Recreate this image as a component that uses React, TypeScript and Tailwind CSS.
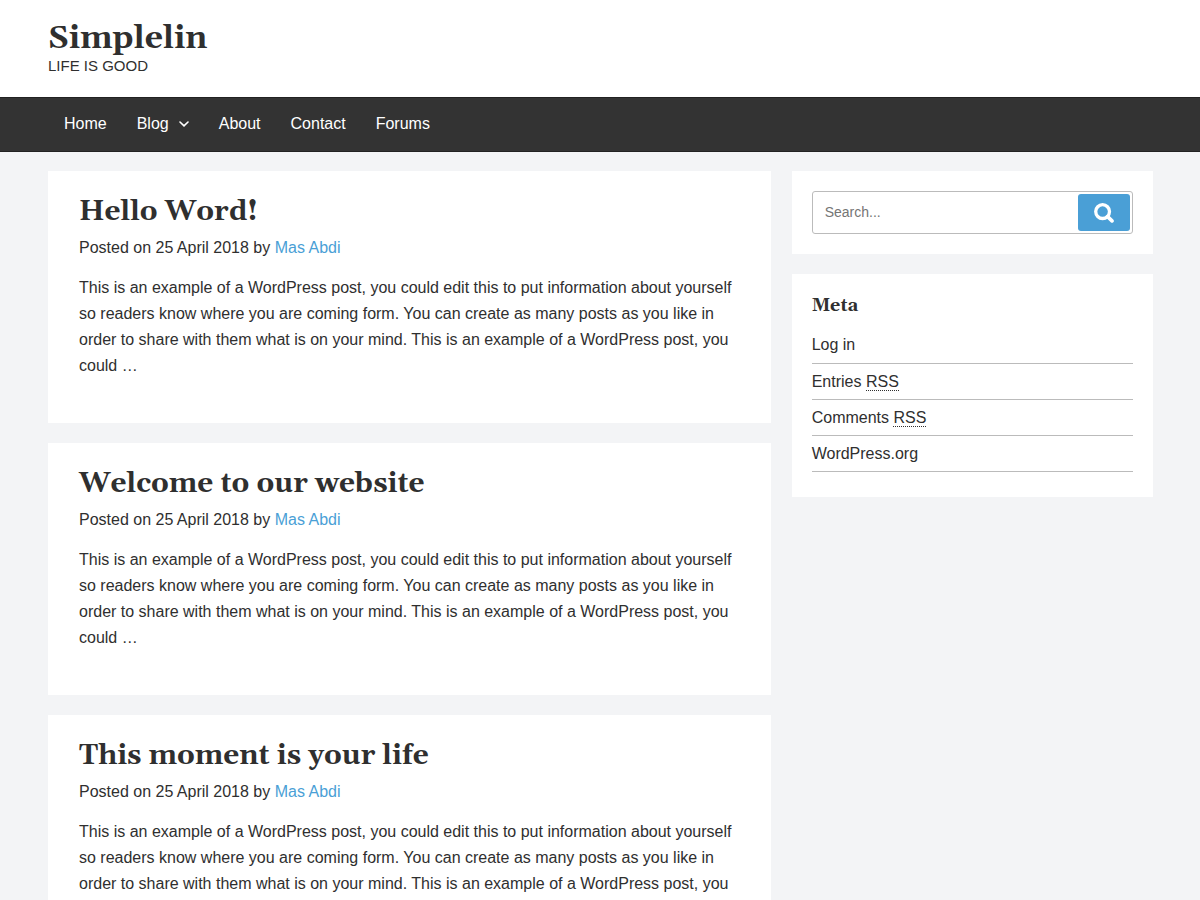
const serif = "font-[Georgia,Gelasio,'DejaVu_Serif',serif]";

const excerpt =
  "This is an example of a WordPress post, you could edit this to put information about yourself so readers know where you are coming form. You can create as many posts as you like in order to share with them what is on your mind. This is an example of a WordPress post, you could …";

const posts = ["Hello Word!", "Welcome to our website", "This moment is your life"];

const navItems = ["Home", "Blog", "About", "Contact", "Forums"];

function Post({ title }: { title: string }) {
  return (
    <article className="bg-white px-[31px] pt-[22px] pb-11">
      <h2 className={`${serif} text-[28px] leading-[38px] font-bold`}>
        <a href="#">{title}</a>
      </h2>
      <p className="mt-1 leading-[26px]">
        Posted on 25 April 2018 by{" "}
        <a href="#" className="text-[#4a9fd6]">
          Mas Abdi
        </a>
      </p>
      <p className="mt-3.5 leading-[26px]">{excerpt}</p>
    </article>
  );
}

function SearchIcon() {
  return (
    <svg viewBox="0 0 20 20" className="size-5" fill="none" stroke="currentColor" aria-hidden="true">
      <circle cx="8.6" cy="8.6" r="6.9" strokeWidth="3.3" />
      <path d="M13.6 13.6 L18 17.9" strokeWidth="3.6" strokeLinecap="round" />
    </svg>
  );
}

function ChevronIcon() {
  return (
    <svg viewBox="0 0 10 6" className="h-[6px] w-[10px]" fill="none" stroke="currentColor" aria-hidden="true">
      <path d="M1 1 L5 4.9 L9 1" strokeWidth="1.6" strokeLinecap="round" />
    </svg>
  );
}

export default function App() {
  return (
    <div className="min-h-screen bg-[#f3f4f6] pb-5 font-['Liberation_Sans',Arial,sans-serif] text-base text-[#2f2f2f]">
      <header className="bg-white">
        <div className="mx-auto max-w-[1200px] px-12 pt-[22px] pb-[21px]">
          <h1 className={`${serif} text-[32px] leading-[34px] font-bold`}>
            <a href="#">Simplelin</a>
          </h1>
          <p className="text-[15px] leading-5">LIFE IS GOOD</p>
        </div>
      </header>

      <nav className="border-y border-[#222222] bg-[#333333] text-white">
        <ul className="mx-auto flex max-w-[1200px] items-center gap-[30px] px-16 pt-3.5 pb-[15px]">
          {navItems.map((item) => (
            <li key={item}>
              <a href="#" className="flex items-center gap-[10px]">
                {item}
                {item === "Blog" && <ChevronIcon />}
              </a>
            </li>
          ))}
        </ul>
      </nav>

      <div className="mx-auto flex max-w-[1200px] items-start gap-[21px] pt-[19px] pr-[47px] pl-12">
        <main className="flex flex-2 flex-col gap-5">
          {posts.map((title) => (
            <Post key={title} title={title} />
          ))}
        </main>

        <aside className="flex flex-1 flex-col gap-5">
          <section className="bg-white p-5">
            <form role="search" className="flex h-[43px] rounded-[3px] border border-[#bbbbbb] p-[2px]">
              <input
                type="search"
                aria-label="Search"
                placeholder="Search..."
                className="min-w-0 flex-1 px-[10px] text-[14px] outline-none placeholder:text-[#757575]"
              />
              <button
                type="button"
                aria-label="Search"
                className="flex w-[52px] items-center justify-center rounded-[3px] bg-[#4a9fd6] text-white"
              >
                <SearchIcon />
              </button>
            </form>
          </section>

          <section className="bg-white px-5 pt-5 pb-[25px]">
            <h3 className={`${serif} mb-2.5 text-[18px] leading-6 font-bold`}>Meta</h3>
            <ul className="leading-[26px]">
              <li className="border-b border-[#bbbbbb] pt-1 pb-[5px]">
                <a href="#">Log in</a>
              </li>
              <li className="border-b border-[#bbbbbb] pt-[5px] pb-1">
                <a href="#">
                  Entries <abbr className="border-b border-dotted border-[#2f2f2f] no-underline">RSS</abbr>
                </a>
              </li>
              <li className="border-b border-[#bbbbbb] pt-[5px] pb-1">
                <a href="#">
                  Comments <abbr className="border-b border-dotted border-[#2f2f2f] no-underline">RSS</abbr>
                </a>
              </li>
              <li className="border-b border-[#bbbbbb] pt-[5px] pb-1">
                <a href="#">WordPress.org</a>
              </li>
            </ul>
          </section>
        </aside>
      </div>
    </div>
  );
}
